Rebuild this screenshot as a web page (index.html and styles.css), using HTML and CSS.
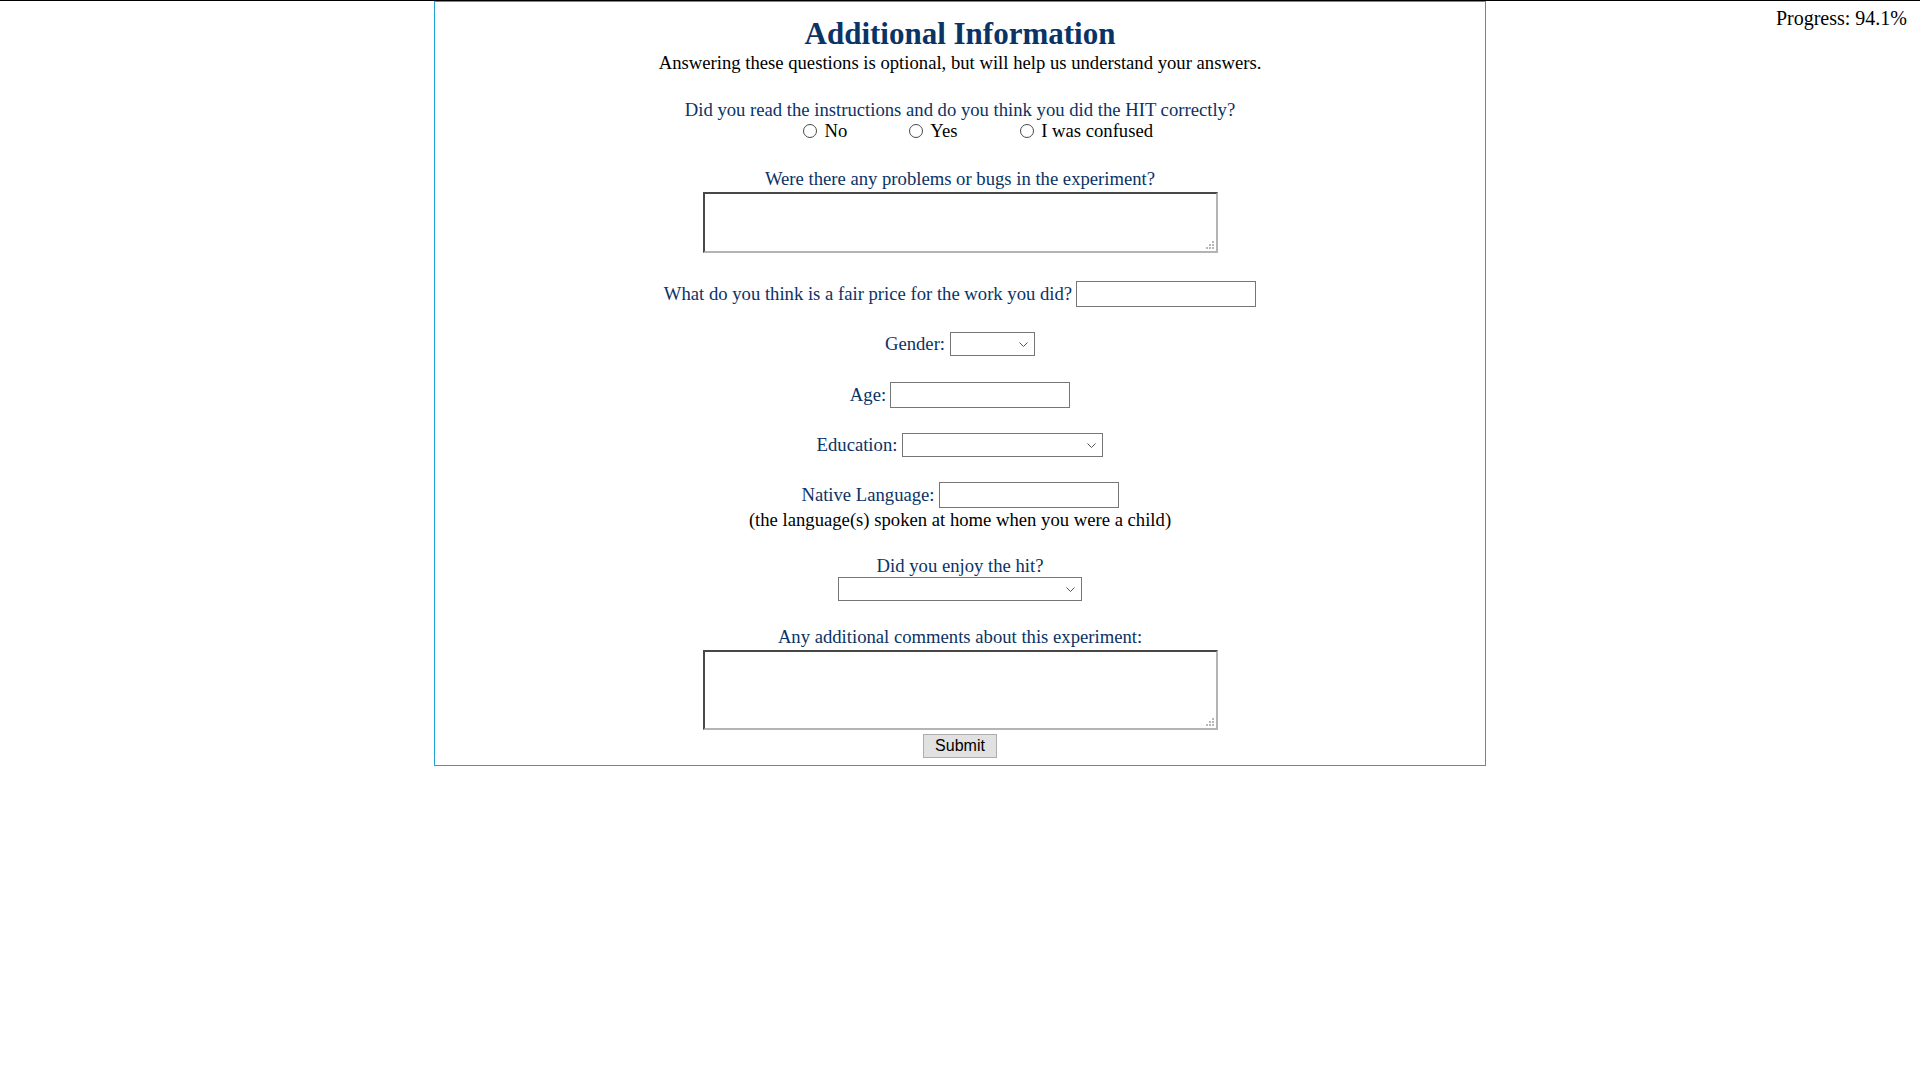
FILE: index.html
```html
<!DOCTYPE html>
<html>
<head>
<meta charset="utf-8">
<title>Additional Information</title>
<link rel="stylesheet" href="styles.css">
</head>
<body>
<div class="page">
  <div class="side"></div>
  <form class="panel">
    <h2 class="heading">Additional Information</h2>
    <div class="subtitle">Answering these questions is optional, but will help us understand your answers.</div>

    <div class="block q-hit">
      <div class="q">Did you read the instructions and do you think you did the HIT correctly?</div>
      <div class="radios">
        <label class="opt"><input type="radio" name="hit" value="no"> No</label>
        <label class="opt"><input type="radio" name="hit" value="yes"> Yes</label>
        <label class="opt"><input type="radio" name="hit" value="confused"> I was confused</label>
      </div>
    </div>

    <div class="block q-bugs">
      <div class="q">Were there any problems or bugs in the experiment?</div>
      <span class="area-wrap area-small-wrap">
        <textarea class="area area-small"></textarea>
        <svg class="grip" width="8" height="8" viewBox="0 0 8 8"><g fill="#b8b8b8"><rect x="6" y="0" width="2" height="2"/><rect x="3" y="3" width="2" height="2"/><rect x="6" y="3" width="2" height="2"/><rect x="0" y="6" width="2" height="2"/><rect x="3" y="6" width="2" height="2"/><rect x="6" y="6" width="2" height="2"/></g></svg>
      </span>
    </div>

    <div class="row row-price">
      <span class="q">What do you think is a fair price for the work you did?</span>
      <input type="text" class="field">
    </div>

    <div class="row row-gender">
      <span class="q">Gender:</span>
      <span class="sel-wrap">
        <select class="sel sel-gender"><option></option><option>Male</option><option>Female</option></select>
        <svg class="chev" width="9" height="5" viewBox="0 0 9 5"><path d="M0.5 0.5 L4.5 4.5 L8.5 0.5" fill="none" stroke="#555" stroke-width="1"/></svg>
      </span>
    </div>

    <div class="row row-age">
      <span class="q">Age:</span>
      <input type="text" class="field">
    </div>

    <div class="row row-edu">
      <span class="q">Education:</span>
      <span class="sel-wrap">
        <select class="sel sel-edu"><option></option><option>High school</option><option>College</option></select>
        <svg class="chev" width="9" height="5" viewBox="0 0 9 5"><path d="M0.5 0.5 L4.5 4.5 L8.5 0.5" fill="none" stroke="#555" stroke-width="1"/></svg>
      </span>
    </div>

    <div class="row row-lang">
      <span class="q">Native Language:</span>
      <input type="text" class="field">
    </div>
    <div class="note">(the language(s) spoken at home when you were a child)</div>

    <div class="block q-enjoy">
      <div class="q">Did you enjoy the hit?</div>
      <span class="sel-wrap">
        <select class="sel sel-enjoy"><option></option><option>Yes</option><option>No</option></select>
        <svg class="chev" width="9" height="5" viewBox="0 0 9 5"><path d="M0.5 0.5 L4.5 4.5 L8.5 0.5" fill="none" stroke="#555" stroke-width="1"/></svg>
      </span>
    </div>

    <div class="block q-comments">
      <div class="q">Any additional comments about this experiment:</div>
      <span class="area-wrap area-large-wrap">
        <textarea class="area area-large"></textarea>
        <svg class="grip" width="8" height="8" viewBox="0 0 8 8"><g fill="#b8b8b8"><rect x="6" y="0" width="2" height="2"/><rect x="3" y="3" width="2" height="2"/><rect x="6" y="3" width="2" height="2"/><rect x="0" y="6" width="2" height="2"/><rect x="3" y="6" width="2" height="2"/><rect x="6" y="6" width="2" height="2"/></g></svg>
      </span>
    </div>

    <button type="button" class="submit">Submit</button>
  </form>
  <div class="progress">Progress: 94.1%</div>
</div>
</body>
</html>
```

FILE: styles.css
```css
html, body {
  margin: 0;
  padding: 0;
  background: #ffffff;
}

body {
  border-top: 1px solid #000000;
  font-family: "Liberation Serif", "Times New Roman", serif;
  font-size: 18.67px;
  line-height: 22px;
  color: #000000;
}

.page {
  display: grid;
  grid-template-columns: 1fr 1052px 1fr;
  align-items: start;
}

.progress {
  justify-self: end;
  padding: 6px 13px 0 0;
  font-size: 20px;
  line-height: 23px;
  color: #000000;
}

.panel {
  box-sizing: border-box;
  width: 1052px;
  margin: 0;
  border: 1px solid #1fa3d5;
  padding: 0 0 7px 0;
  display: flex;
  flex-direction: column;
  align-items: center;
}

.heading {
  margin: 14px 0 0 0;
  font-size: 31px;
  line-height: 36px;
  font-weight: bold;
  color: #0a3366;
}

.subtitle {
  margin: 0;
  color: #000000;
}

.q {
  color: #0a3366;
}

.block {
  display: flex;
  flex-direction: column;
  align-items: center;
}

.q-hit { margin-top: 25px; }

.radios {
  display: flex;
  justify-content: center;
  gap: 57px;
  padding-left: 31px;
  margin-top: -1px;
  color: #000000;
}

.opt input {
  appearance: none;
  -webkit-appearance: none;
  box-sizing: border-box;
  width: 14px;
  height: 14px;
  margin: 3px 3px 0 5px;
  border: 1px solid #4a4a4a;
  border-radius: 50%;
  background: #ffffff;
  vertical-align: -1px;
}

.q-bugs { margin-top: 26px; }

.area-wrap {
  position: relative;
  display: block;
  width: 515px;
}

.area-small-wrap { margin-top: 2px; height: 61px; }
.area-large-wrap { margin-top: 2px; height: 80px; }

.area {
  box-sizing: border-box;
  display: block;
  width: 515px;
  margin: 0;
  padding: 2px;
  border-style: solid;
  border-width: 2px 2px 2px 2px;
  border-color: #484848 #b4b4b4 #b4b4b4 #484848;
  background: #ffffff;
  font-family: "Liberation Mono", monospace;
  font-size: 13px;
  resize: none;
}

.area-small { height: 61px; }
.area-large { height: 80px; }

.grip {
  position: absolute;
  right: 4px;
  bottom: 4px;
  pointer-events: none;
}

.row {
  display: flex;
  align-items: center;
  justify-content: center;
  gap: 5px;
}

.row-price { margin-top: 28px; gap: 4px; }
.row-gender { margin-top: 25px; }
.row-age { margin-top: 26px; gap: 4px; }
.row-edu { margin-top: 25px; }
.row-lang { margin-top: 25px; gap: 4px; }

.field {
  box-sizing: border-box;
  width: 180px;
  height: 26px;
  margin: 0;
  padding: 1px 2px;
  border: 1px solid #767676;
  border-radius: 0;
  background: #ffffff;
  font-family: "Liberation Sans", Arial, sans-serif;
  font-size: 13.33px;
}

.sel-wrap {
  position: relative;
  display: block;
  height: 24px;
}

.sel {
  appearance: none;
  -webkit-appearance: none;
  box-sizing: border-box;
  display: block;
  height: 24px;
  margin: 0;
  padding: 0 20px 0 4px;
  border: 1px solid #767676;
  border-radius: 0;
  background-color: #ffffff;
  font-family: "Liberation Sans", Arial, sans-serif;
  font-size: 13.33px;
  color: #000000;
}

.chev {
  position: absolute;
  right: 7px;
  top: 10px;
  pointer-events: none;
}

.sel-gender { width: 85px; }
.sel-edu { width: 201px; }
.sel-enjoy { width: 244px; }

.note {
  margin-top: 1px;
  color: #000000;
}

.q-enjoy { margin-top: 24px; }

.q-comments { margin-top: 25px; }

.submit {
  box-sizing: border-box;
  height: 24px;
  margin-top: 4px;
  padding: 1px 11px;
  border: 1px solid #adadad;
  border-radius: 0;
  background: #e1e1e1;
  font-family: "Liberation Sans", Arial, sans-serif;
  font-size: 16px;
  line-height: 18px;
  color: #000000;
}
```
